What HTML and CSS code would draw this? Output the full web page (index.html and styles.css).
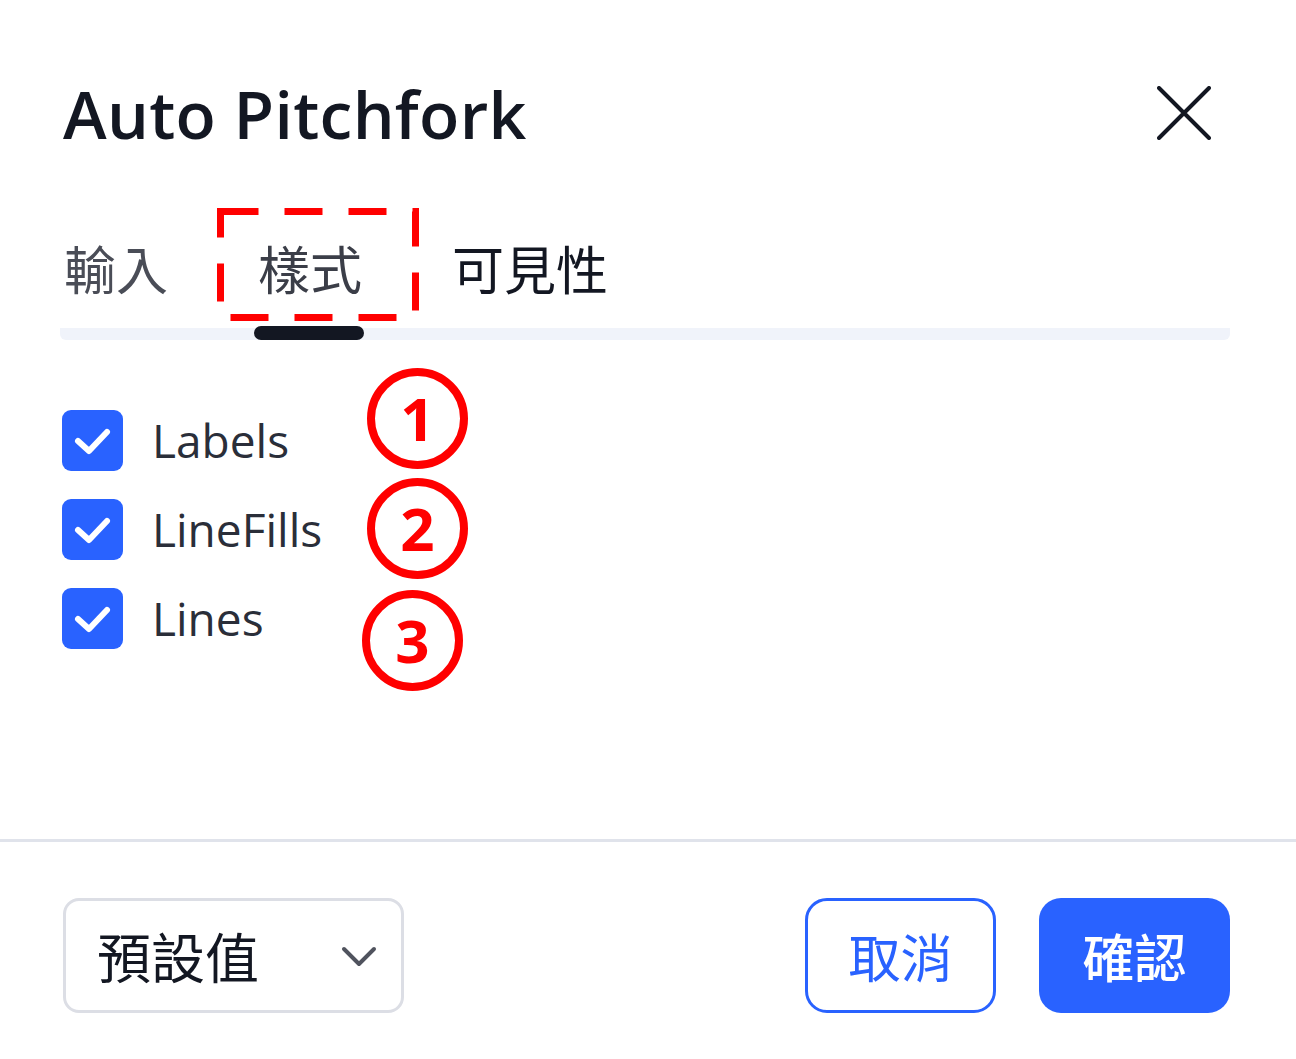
FILE: index.html
```html
<!DOCTYPE html>
<html lang="zh-Hant">
<head>
<meta charset="utf-8">
<title>Auto Pitchfork</title>
<link rel="stylesheet" href="styles.css">
</head>
<body>
<div class="dialog">
  <div class="header">
    <h1 class="title">Auto Pitchfork</h1>
    <button class="close" aria-label="close">
      <svg viewBox="0 0 54 54" width="54" height="54"><path d="M2 2 L52 52 M52 2 L2 52" stroke="#131722" stroke-width="4" stroke-linecap="round" fill="none"/></svg>
    </button>
  </div>

  <div class="tabs-wrap">
    <div class="tabs">
      <div class="tab tab-first">輸入</div>
      <div class="tab tab-active">樣式</div>
      <div class="tab">可見性</div>
    </div>
    <svg class="annot-box" width="206" height="116" viewBox="0 0 206 116"><rect x="3.5" y="3.5" width="195" height="106" fill="none" stroke="#ff0000" stroke-width="7" stroke-dasharray="38 26"/></svg>
  </div>

  <div class="list">
    <label class="row">
      <span class="check"><svg viewBox="0 0 61 61" width="61" height="61"><polyline points="16,31 27,41 45,22" fill="none" stroke="#fff" stroke-width="6" stroke-linecap="round" stroke-linejoin="round"/></svg></span>
      <span class="label">Labels</span>
    </label>
    <label class="row">
      <span class="check"><svg viewBox="0 0 61 61" width="61" height="61"><polyline points="16,31 27,41 45,22" fill="none" stroke="#fff" stroke-width="6" stroke-linecap="round" stroke-linejoin="round"/></svg></span>
      <span class="label">LineFills</span>
    </label>
    <label class="row">
      <span class="check"><svg viewBox="0 0 61 61" width="61" height="61"><polyline points="16,31 27,41 45,22" fill="none" stroke="#fff" stroke-width="6" stroke-linecap="round" stroke-linejoin="round"/></svg></span>
      <span class="label">Lines</span>
    </label>
    <span class="num num1">1</span>
    <span class="num num2">2</span>
    <span class="num num3">3</span>
  </div>

  <div class="divider"></div>

  <div class="footer">
    <div class="select">
      <span class="select-text">預設值</span>
      <svg class="chev" viewBox="0 0 36 22" width="36" height="22"><polyline points="3,3 18,18 33,3" fill="none" stroke="#50535e" stroke-width="4" stroke-linecap="round" stroke-linejoin="round"/></svg>
    </div>
    <div class="buttons">
      <button class="btn btn-cancel">取消</button>
      <button class="btn btn-ok">確認</button>
    </div>
  </div>
</div>
</body>
</html>
```

FILE: styles.css
```css
* { box-sizing: border-box; }
html, body { margin: 0; padding: 0; background: #fff; }
body {
  width: 1296px;
  height: 1059px;
  overflow: hidden;
  font-family: "Open Sans", "Noto Sans CJK TC", sans-serif;
  color: #131722;
}
.dialog {
  width: 1296px;
  height: 1059px;
  display: flex;
  flex-direction: column;
}
.header {
  display: flex;
  align-items: center;
  justify-content: space-between;
  height: 96px;
  margin-top: 65px;
  padding: 0 85px 0 63px;
}
.title {
  margin: 0;
  font-size: 66px;
  font-weight: 600;
  line-height: 96px;
  letter-spacing: 0.3px;
  color: #131722;
}
.close {
  border: 0;
  background: none;
  padding: 0;
  width: 54px;
  height: 54px;
  display: block;
}
.close svg { display: block; }

.tabs-wrap {
  position: relative;
  margin: 69px 66px 0 60px;
}
.tabs {
  display: flex;
  gap: 82px;
  height: 110px;
  border-bottom: 12px solid #f0f3fa;
  border-radius: 0 0 6px 6px;
}
.tab {
  position: relative;
  padding: 8px 4px 0 4px;
  font-family: "Noto Sans CJK TC", sans-serif;
  font-size: 52px;
  line-height: 60px;
  color: #131722;
}
.tab-first { color: #4a4d57; }
.tab-active { color: #3b3e48; }
.tab-active::after {
  content: "";
  position: absolute;
  left: 0;
  right: 2px;
  bottom: -12px;
  height: 14px;
  background: #131722;
  border-radius: 7px;
}
.annot-box {
  position: absolute;
  left: 157px;
  top: -22px;
}

.list {
  position: relative;
  margin: 70px 62px 0 62px;
  display: flex;
  flex-direction: column;
  gap: 28px;
  height: 429px;
}
.row {
  display: flex;
  align-items: center;
  gap: 29px;
  height: 61px;
}
.check {
  width: 61px;
  height: 61px;
  border-radius: 9px;
  background: #2962ff;
  display: block;
}
.check svg { display: block; }
.label {
  font-size: 46px;
  line-height: 61px;
  color: #2a2e39;
}
.num {
  position: absolute;
  width: 101px;
  height: 101px;
  border: 8px solid #ff0000;
  border-radius: 50%;
  color: #ff0000;
  font-family: "Noto Sans", sans-serif;
  font-weight: 700;
  font-size: 60px;
  line-height: 85px;
  text-align: center;
}
.num1 { left: 305px; top: -42px; }
.num2 { left: 305px; top: 68px; }
.num3 { left: 300px; top: 180px; }

.divider {
  height: 3px;
  background: #e0e3eb;
}

.footer {
  display: flex;
  justify-content: space-between;
  align-items: center;
  margin-top: 56px;
  padding: 0 66px 0 63px;
}
.select {
  width: 341px;
  height: 115px;
  border: 3px solid #dcdee5;
  border-radius: 16px;
  display: flex;
  align-items: center;
  justify-content: space-between;
  padding: 0 24px 0 31px;
}
.select-text {
  font-family: "Noto Sans CJK TC", sans-serif;
  font-size: 54px;
  color: #131722;
}
.chev { display: block; margin-top: 2px; }
.buttons {
  display: flex;
  gap: 43px;
}
.btn {
  width: 191px;
  height: 115px;
  border-radius: 22px;
  font-family: "Noto Sans CJK TC", sans-serif;
  font-size: 52px;
  padding: 0;
  cursor: pointer;
}
.btn-cancel {
  background: #fff;
  border: 3px solid #2962ff;
  color: #2962ff;
}
.btn-ok {
  background: #2962ff;
  border: 0;
  color: #fff;
  font-weight: 500;
}
```
